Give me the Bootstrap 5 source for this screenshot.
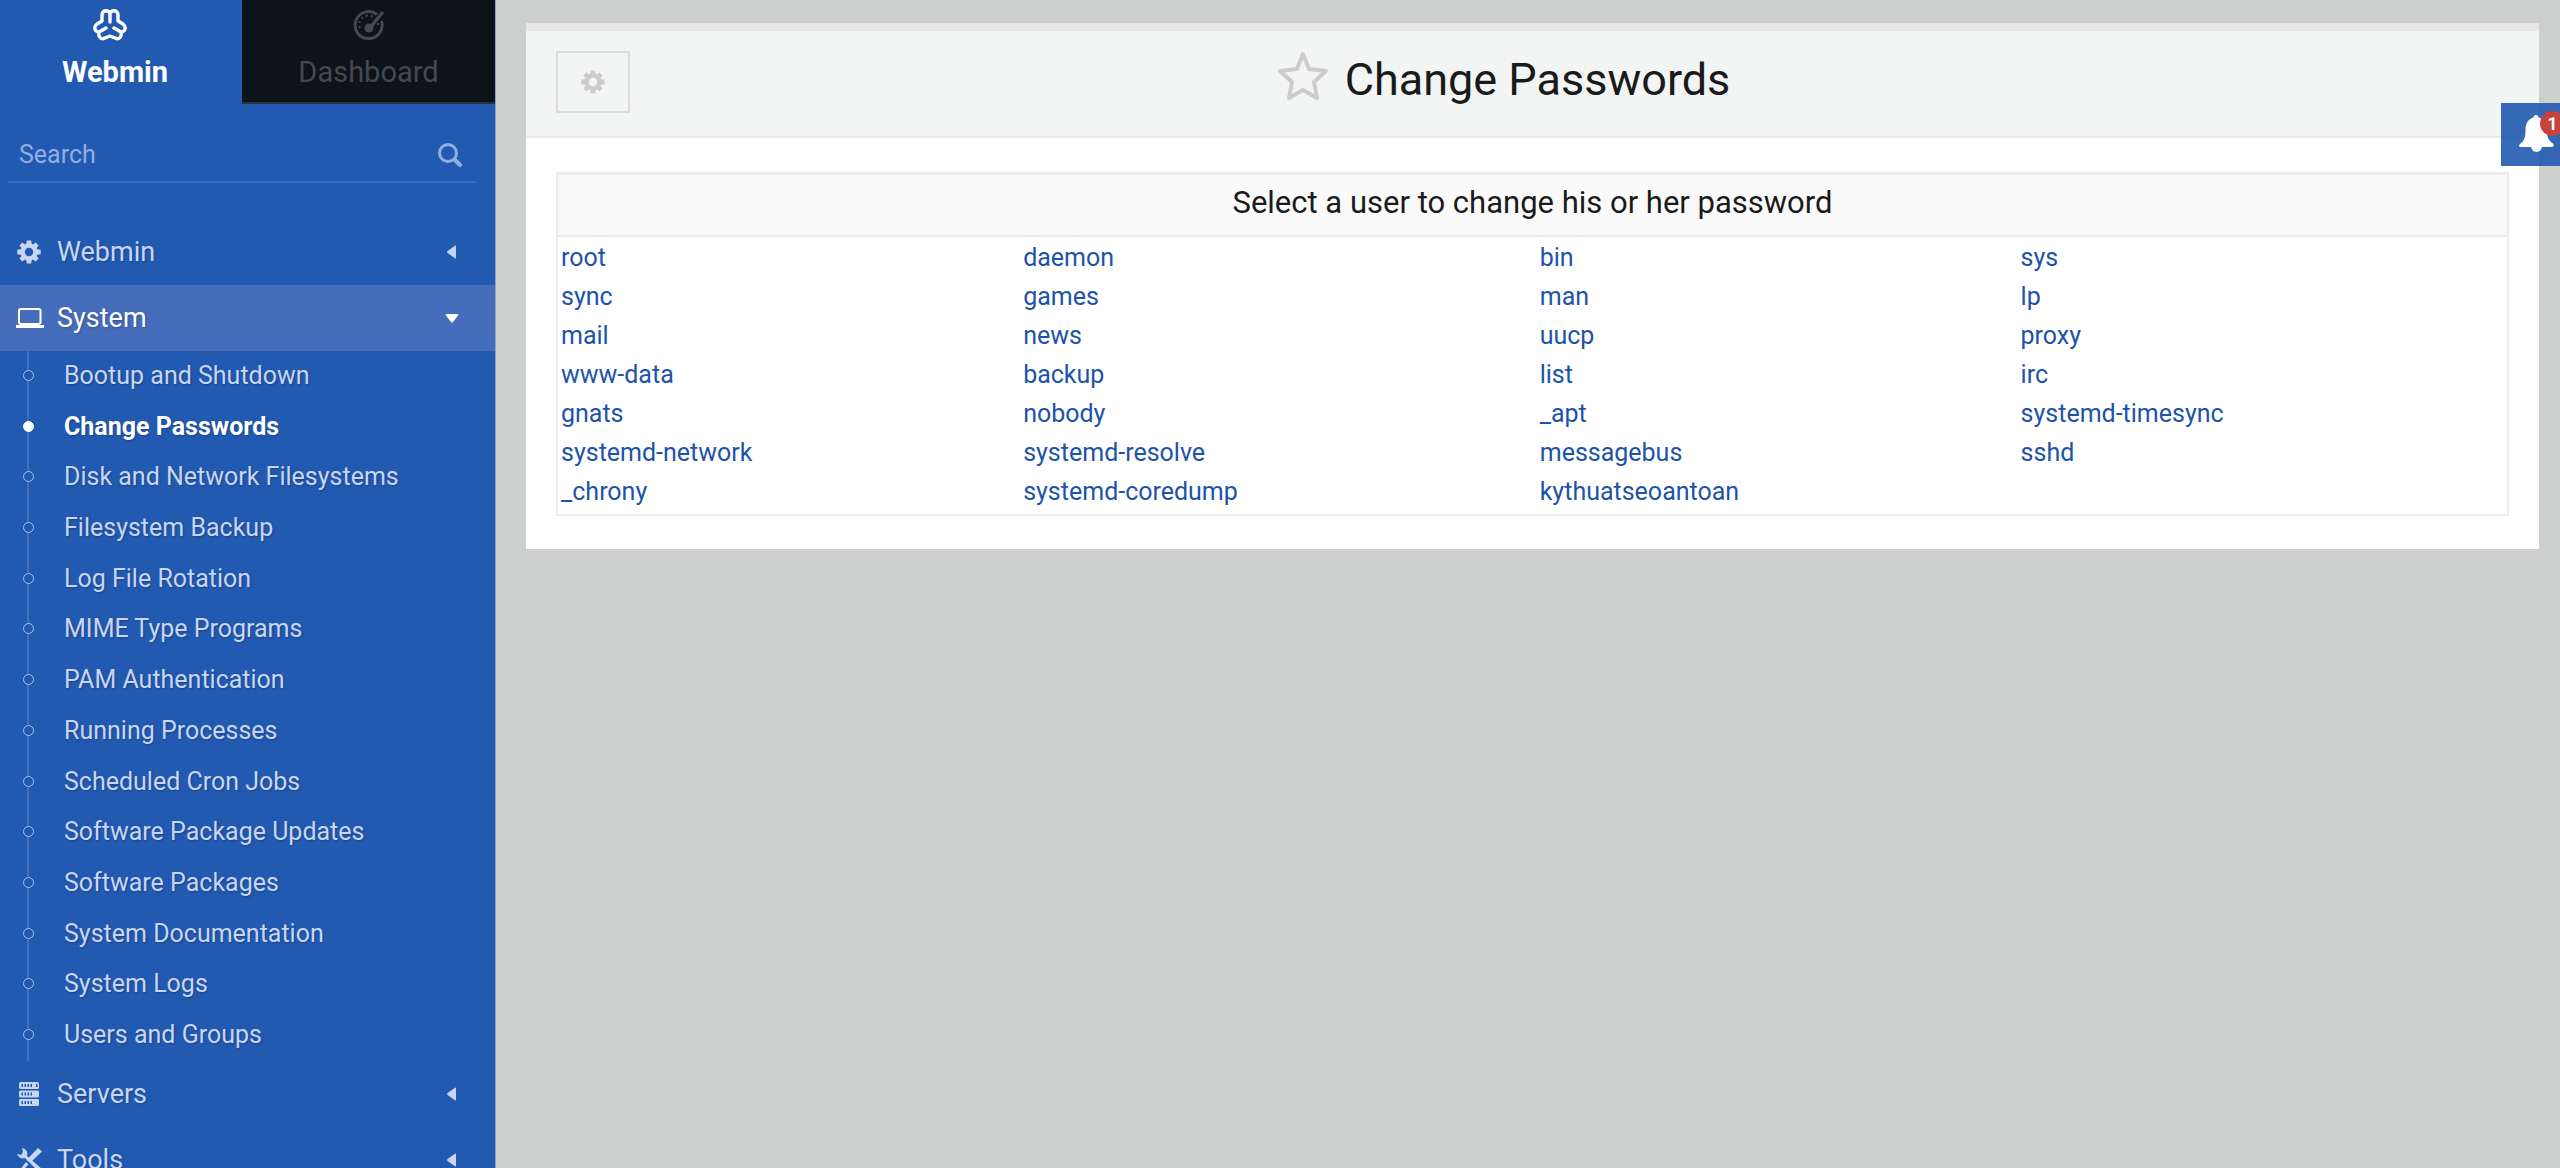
<!DOCTYPE html>
<html lang="en">
<head>
<meta charset="utf-8">
<meta name="viewport" content="width=device-width, initial-scale=1">
<title>Change Passwords</title>
<link href="https://cdn.jsdelivr.net/npm/bootstrap@5.3.0/dist/css/bootstrap.min.css" rel="stylesheet">
<style>
body{font-family:Roboto,"Liberation Sans",sans-serif;font-size:25px;line-height:39px;background:#cdcfce;color:#1a1a1a}
a{text-decoration:none}
.side{width:496px;background:#225ab2;border-right:1px solid #8ea3c4;height:100vh}
.tabs-top{height:104px;margin-bottom:24px}
.tab-item{font-size:29px;line-height:36px;color:#45484f;padding-top:9px}
.tab-item svg{display:block;margin-bottom:13px}
.tab-main{width:242px;color:#fff;font-weight:700;padding-right:12px}
.tab-dash{background:#0d131b;border-bottom:2px solid #2b3138}
.tab-main svg{margin-right:10px}
.find{margin:0 19px 36px 8px;height:55px;border-bottom:2px solid #3a6bba;padding:0 14px 0 11px}
.find input{background:none;border:0;outline:0;padding:0;color:#fff;font-size:25px;line-height:39px;min-width:0}
.find input::placeholder{color:#91aee0;opacity:1}
.group{height:66px;padding:0 36px 0 16px;color:#c8d6f5;font-size:27px;text-shadow:1px 1px 2px rgba(0,0,0,.25)}
.group.open{background:#466dbb;color:#fff}
.group .ico{width:41px}
.subs{display:grid;grid-auto-rows:1fr;height:710px;background:linear-gradient(#3f6fbd,#3f6fbd) 27px 0/2px 100% no-repeat}
.subs a{color:#c8d6f5;padding:0 0 2px 23px;text-shadow:1px 1px 2px rgba(0,0,0,.25)}
.dot{width:11px;height:11px;border-radius:50%;border:1px solid #a9c0e8;background:#225ab2;margin-right:30px}
.subs a.now{color:#fff;font-weight:700}
.now .dot{background:#fff;border-color:#fff}
.main-area{padding:23px 21px 0 30px;min-width:0}
.panel{background:#fff;border-top:8px solid #e7e7e7;padding-bottom:33px}
.panel-top{background:#f3f5f4;border-bottom:2px solid #e6e9e8;height:107px;padding:0 30px 4px;display:grid;grid-template-columns:1fr auto 1fr;align-items:center}
.gear{width:74px;height:62px;border:2px solid #dcdcdc;color:#ccc;background:none;padding:0}
.page-title{padding:0 58px 4px 0}
.page-title h1{font-size:45px;line-height:56px;margin:0;font-weight:400}
.users{margin:34px 30px 0;border:2px solid #ececec;border-top-width:3px}
.users h2{margin:0;font-size:31px;line-height:56px;height:62px;font-weight:400;background:#f9faf9;border-bottom:2px solid #ebebeb}
.users table{margin:1px 0 3px}
.users td{padding:0 3px;height:39px}
.users a{color:#1d53a8}
.bell{position:fixed;right:0;top:103px;width:59px;height:63px;background:rgba(34,90,178,.9);border:0;padding:0;color:#fff;overflow:hidden}
.bell svg{position:absolute;left:18px;top:12px}
.count{position:absolute;left:39px;top:8px;width:25px;height:25px;border-radius:50%;background:#c7423a;font-size:18px;line-height:25px;font-weight:700;text-align:center}
</style>
<script src="https://cdn.jsdelivr.net/npm/bootstrap@5.3.0/dist/js/bootstrap.bundle.min.js"></script>
</head>
<body class="d-flex vh-100 overflow-hidden">
<svg class="d-none">
<symbol id="cog" viewBox="-12 -12 24 24"><path fill-rule="evenodd" fill="currentColor" d="M-2.200-11.400L2.200-11.400L2.700-8.200L4-7.600L6.600-9.600L9.600-6.600L7.600-4L8.200-2.700L11.700-2.200L11.700 2.200L8.200 2.700L7.600 4L9.600 6.600L6.600 9.600L4 7.600L2.700 8.200L2.200 11.500L-2.200 11.500L-2.700 8.200L-4 7.600L-6.600 9.600L-9.600 6.600L-7.600 4L-8.200 2.700L-11.700 2.200L-11.700-2.200L-8.200-2.700L-7.600-4L-9.600-6.600L-6.600-9.600L-4-7.600L-2.700-8.200ZM0-4.200A4.200 4.200 0 1 0 0 4.200A4.200 4.200 0 1 0 0-4.200Z"/></symbol>
<symbol id="left" viewBox="0 0 14 14"><path fill="currentColor" d="M11 1.500V12.500Q11 14 9.700 13L2.600 8Q1.600 7 2.600 6L9.700 1Q11 0 11 1.500Z"/></symbol>
</svg>
<aside class="side flex-shrink-0">
<nav class="tabs-top d-flex" aria-label="Sections">
<a href="#" class="tab-item tab-main d-flex flex-column align-items-center">
<svg width="34" height="32" viewBox="0 0 34 32" fill="none" stroke="#fff" stroke-width="3.400" stroke-linecap="round" stroke-linejoin="round"><path d="M17 13V5C17 1 9 0 9 6V12L4 15C0 18 2 23 6 23C5 28 8 31 12 29L17 27L22 29C26 31 29 28 28 23C32 23 34 18 30 15L25 12V6C25 0 17 1 17 5M6 23L13 19M28 23L21 19"/></svg>
<span>Webmin</span></a>
<a href="#" class="tab-item tab-dash d-flex flex-column align-items-center flex-fill">
<svg width="32" height="32" viewBox="0 0 32 32" fill="none" stroke="currentColor"><path stroke-width="3" d="M24 5.500A13.500 13.500 0 1 0 28.500 12"/><path d="M29 4L17 19" stroke-width="3.500" stroke-linecap="round"/><circle cx="16" cy="19" r="4.500" fill="currentColor" stroke="none"/><path stroke-width="2" stroke-dasharray="2 3" d="M7 19A9 9 0 0 1 21 8.500M25 14V19"/></svg>
<span>Dashboard</span></a>
</nav>
<form class="find d-flex align-items-center">
<input class="flex-fill" type="search" placeholder="Search" aria-label="Search">
<svg width="24" height="24" viewBox="0 0 24 24" fill="none" stroke="#91aee0" stroke-width="3" stroke-linecap="round"><circle cx="10" cy="10" r="8.500"/><path stroke-width="4" d="M17 17L22 22"/></svg>
</form>
<a href="#" class="group d-flex align-items-center"><span class="ico d-flex"><svg width="26" height="24"><use href="#cog"/></svg></span><span class="flex-fill">Webmin</span><svg width="14" height="14"><use href="#left"/></svg></a>
<a href="#" class="group open d-flex align-items-center"><span class="ico d-flex"><svg width="28" height="20" viewBox="0 0 28 20" fill="none" stroke="#fff"><rect x="3" y="1" width="21.500" height="15" rx="2" stroke-width="2"/><path stroke-width="3" d="M0 18.500H28"/></svg></span><span class="flex-fill">System</span><svg width="14" height="9" viewBox="0 0 14 9"><path fill="#fff" d="M1.500 0H12.500Q14 0 13 1.500L8 8Q7 9 6 8L1 1.500Q0 0 1.500 0Z"/></svg></a>
<nav class="subs" aria-label="System">
<a href="#" class="d-flex align-items-center"><span class="dot"></span>Bootup and Shutdown</a>
<a href="#" class="now d-flex align-items-center"><span class="dot"></span>Change Passwords</a>
<a href="#" class="d-flex align-items-center"><span class="dot"></span>Disk and Network Filesystems</a>
<a href="#" class="d-flex align-items-center"><span class="dot"></span>Filesystem Backup</a>
<a href="#" class="d-flex align-items-center"><span class="dot"></span>Log File Rotation</a>
<a href="#" class="d-flex align-items-center"><span class="dot"></span>MIME Type Programs</a>
<a href="#" class="d-flex align-items-center"><span class="dot"></span>PAM Authentication</a>
<a href="#" class="d-flex align-items-center"><span class="dot"></span>Running Processes</a>
<a href="#" class="d-flex align-items-center"><span class="dot"></span>Scheduled Cron Jobs</a>
<a href="#" class="d-flex align-items-center"><span class="dot"></span>Software Package Updates</a>
<a href="#" class="d-flex align-items-center"><span class="dot"></span>Software Packages</a>
<a href="#" class="d-flex align-items-center"><span class="dot"></span>System Documentation</a>
<a href="#" class="d-flex align-items-center"><span class="dot"></span>System Logs</a>
<a href="#" class="d-flex align-items-center"><span class="dot"></span>Users and Groups</a>
</nav>
<a href="#" class="group d-flex align-items-center"><span class="ico d-flex"><svg width="26" height="24" viewBox="0 0 26 24"><g fill="currentColor"><rect x="3" width="20" height="7" rx="1.500"/><rect x="3" y="8.500" width="20" height="7" rx="1.500"/><rect x="3" y="17" width="20" height="7" rx="1.500"/></g><path stroke="#225ab2" stroke-width="3" stroke-dasharray="1.500 1.500" d="M5.500 3.500H17M5.500 12H17M5.500 20.500H17M20 3.500H21.500"/></svg></span><span class="flex-fill">Servers</span><svg width="14" height="14"><use href="#left"/></svg></a>
<a href="#" class="group d-flex align-items-center"><span class="ico d-flex"><svg width="28" height="26" viewBox="0 0 28 26"><path fill="currentColor" d="M22 1L26 4.500L14 16L10.500 13ZM10 15L12.500 17.500L5 25L3 24ZM6 1A6 6 0 0 1 11 9L26 22L23 25L9 11A6 6 0 0 1 1 7L5 8L7 5Z"/></svg></span><span class="flex-fill">Tools</span><svg width="14" height="14"><use href="#left"/></svg></a>
</aside>
<main class="main-area flex-fill">
<section class="panel">
<header class="panel-top">
<button class="gear d-flex align-items-center justify-content-center" type="button" aria-label="Module configuration"><svg width="24" height="24"><use href="#cog"/></svg></button>
<div class="page-title d-flex align-items-center gap-3"><svg class="mb-2" width="52" height="50" viewBox="0 0 52 50" fill="none" stroke="#ccc" stroke-width="4" stroke-linejoin="round"><path d="M26 3L32 18L49 20L37 31L40 47L26 39L12 47L15 31L3 20L20 18Z"/></svg><h1>Change Passwords</h1></div>
</header>
<div class="users">
<h2 class="text-center">Select a user to change his or her password</h2>
<table class="w-100">
<tbody>
<tr><td><a href="#">root</a></td><td><a href="#">daemon</a></td><td><a href="#">bin</a></td><td><a href="#">sys</a></td></tr>
<tr><td><a href="#">sync</a></td><td><a href="#">games</a></td><td><a href="#">man</a></td><td><a href="#">lp</a></td></tr>
<tr><td><a href="#">mail</a></td><td><a href="#">news</a></td><td><a href="#">uucp</a></td><td><a href="#">proxy</a></td></tr>
<tr><td><a href="#">www-data</a></td><td><a href="#">backup</a></td><td><a href="#">list</a></td><td><a href="#">irc</a></td></tr>
<tr><td><a href="#">gnats</a></td><td><a href="#">nobody</a></td><td><a href="#">_apt</a></td><td><a href="#">systemd-timesync</a></td></tr>
<tr><td><a href="#">systemd-network</a></td><td><a href="#">systemd-resolve</a></td><td><a href="#">messagebus</a></td><td><a href="#">sshd</a></td></tr>
<tr><td><a href="#">_chrony</a></td><td><a href="#">systemd-coredump</a></td><td><a href="#">kythuatseoantoan</a></td><td></td></tr>
</tbody>
</table>
</div>
</section>
</main>
<button class="bell" type="button" aria-label="Notifications"><svg width="36" height="38" viewBox="0 0 36 38" fill="currentColor"><path d="M17 0A2.500 2.500 0 0 1 19.500 2.500C26 4 28 9 28 15C28 23 30 26 34.500 29Q35 32 33 32H1Q-1 31 1 29C5 26 6.500 23 6.500 15C6.500 9 9 4 14.500 2.500A2.500 2.500 0 0 1 17 0Z"/><path d="M12 31A5.500 6 0 0 0 23 31Z"/></svg><span class="count">1</span></button>
</body>
</html>
